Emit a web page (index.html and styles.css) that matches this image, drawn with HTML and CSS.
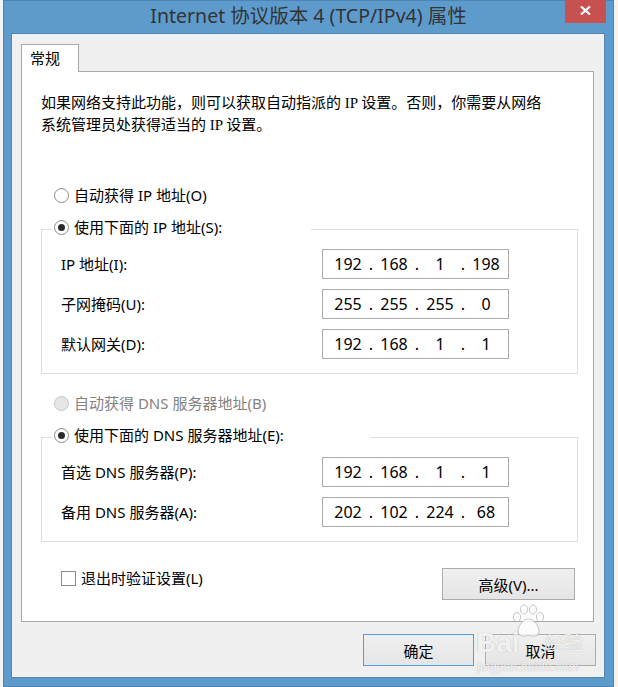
FILE: index.html
```html
<!DOCTYPE html>
<html lang="zh-CN">
<head>
<meta charset="utf-8">
<title>Internet 协议版本 4 (TCP/IPv4) 属性</title>
<link rel="stylesheet" href="styles.css">
</head>
<body>
<div class="window">
  <div class="titlebar">
    <span class="title">Internet 协议版本 4 (TCP/IPv4) 属性</span>
    <button class="close" type="button" aria-label="关闭">
      <svg width="11" height="9" viewBox="0 0 11 9"><path d="M1 0.5 L10 8.5 M10 0.5 L1 8.5" stroke="#fff" stroke-width="2.2" fill="none"/></svg>
    </button>
  </div>
  <div class="client">
    <div class="tab">常规</div>
    <div class="panel">
      <p class="desc">如果网络支持此功能，则可以获取自动指派的 IP 设置。否则，你需要从网络<br>系统管理员处获得适当的 IP 设置。</p>

      <div class="radio-row r-auto-ip"><span class="radio"></span><span>自动获得 IP 地址(O)</span></div>

      <div class="group">
        <div class="group-head head-ip"><div class="radio-row"><span class="radio on"></span><span>使用下面的 IP 地址(S):</span></div></div>
        <div class="fields">
          <span class="lbl">IP 地址(I):</span>
          <div class="ip"><span class="oct">192</span><span class="dot">.</span><span class="oct">168</span><span class="dot">.</span><span class="oct">1</span><span class="dot">.</span><span class="oct">198</span></div>
          <span class="lbl">子网掩码(U):</span>
          <div class="ip"><span class="oct">255</span><span class="dot">.</span><span class="oct">255</span><span class="dot">.</span><span class="oct">255</span><span class="dot">.</span><span class="oct">0</span></div>
          <span class="lbl">默认网关(D):</span>
          <div class="ip"><span class="oct">192</span><span class="dot">.</span><span class="oct">168</span><span class="dot">.</span><span class="oct">1</span><span class="dot">.</span><span class="oct">1</span></div>
        </div>
      </div>

      <div class="radio-row r-auto-dns disabled"><span class="radio"></span><span>自动获得 DNS 服务器地址(B)</span></div>

      <div class="group">
        <div class="group-head head-dns"><div class="radio-row"><span class="radio on"></span><span>使用下面的 DNS 服务器地址(E):</span></div></div>
        <div class="fields">
          <span class="lbl">首选 DNS 服务器(P):</span>
          <div class="ip"><span class="oct">192</span><span class="dot">.</span><span class="oct">168</span><span class="dot">.</span><span class="oct">1</span><span class="dot">.</span><span class="oct">1</span></div>
          <span class="lbl">备用 DNS 服务器(A):</span>
          <div class="ip"><span class="oct">202</span><span class="dot">.</span><span class="oct">102</span><span class="dot">.</span><span class="oct">224</span><span class="dot">.</span><span class="oct">68</span></div>
        </div>
      </div>

      <div class="opts-row">
        <div class="check-row"><span class="check"></span><span>退出时验证设置(L)</span></div>
        <button class="btn btn-adv" type="button">高级(V)...</button>
      </div>
    </div>
    <div class="actions">
      <button class="btn btn-main default" type="button">确定</button>
      <button class="btn btn-main" type="button">取消</button>
    </div>
  </div>
</div>

<div class="watermark" aria-hidden="true">
  <svg class="wm-paw" width="36" height="34" viewBox="0 0 36 34">
    <g fill="rgba(255,255,255,0.8)" stroke="rgba(150,150,150,0.55)" stroke-width="1">
      <ellipse cx="7" cy="13" rx="3.6" ry="4.6"/>
      <ellipse cx="14" cy="5.5" rx="3.6" ry="4.6"/>
      <ellipse cx="23" cy="5.5" rx="3.6" ry="4.6"/>
      <ellipse cx="30" cy="13" rx="3.6" ry="4.6"/>
      <path d="M18.5 15 C12 15 8 23 8 27.5 C8 32.5 13 32.5 18.5 31.5 C24 32.5 29 32.5 29 27.5 C29 23 25 15 18.5 15 Z"/>
    </g>
  </svg>
  <span class="wm-bai">Bai</span>
  <span class="wm-jy">经验</span>
  <span class="wm-url">jingyan.baidu.com</span>
</div>
</body>
</html>
```

FILE: styles.css
```css
* { box-sizing: border-box; }

html, body {
  margin: 0;
  padding: 0;
}

body {
  position: relative;
  width: 618px;
  height: 687px;
  overflow: hidden;
  background: #f3f3f3;
  font-family: "Noto Sans", "Noto Sans CJK SC", sans-serif;
  font-size: 15px;
  color: #000;
}

.window {
  position: relative;
  margin-left: 3px;
  width: 611px;
  height: 687px;
  background: #5e9bcd;
  border: 1px solid #4d84b6;
}

.titlebar {
  position: relative;
  height: 32px;
  padding-bottom: 2px;
  display: flex;
  align-items: center;
  justify-content: center;
}

.title {
  font-size: 19.5px;
  line-height: 24px;
  color: #333;
}

.close {
  position: absolute;
  top: -1px;
  right: 7px;
  width: 41px;
  height: 23px;
  padding: 0 0 2px;
  border: 0;
  background: #c75050;
  display: flex;
  align-items: center;
  justify-content: center;
}

.close svg { display: block; }

.client {
  margin-left: 7px;
  width: 594px;
  height: 645px;
  background: #f0f0f0;
  border: 1px solid #5586b3;
  display: flex;
  flex-direction: column;
}

.tab {
  position: relative;
  z-index: 1;
  margin: 10px 0 0 9px;
  width: 58px;
  height: 28px;
  padding-left: 8px;
  background: #fff;
  border: 1px solid #a8a8a8;
  border-bottom: 0;
  line-height: 26px;
}

.panel {
  margin: -1px 0 0 9px;
  width: 573px;
  height: 551px;
  padding: 0 15px 0 19px;
  background: #fff;
  border: 1px solid #a8a8a8;
}

.desc {
  margin: 20px 0 0;
  font-family: "Liberation Serif", "Noto Sans CJK SC", serif;
  line-height: 22px;
}

.radio-row {
  display: flex;
  align-items: center;
  gap: 5px;
  height: 22px;
  line-height: 22px;
  white-space: nowrap;
}

.radio {
  position: relative;
  flex: none;
  width: 15px;
  height: 15px;
  border-radius: 50%;
  border: 1px solid #8c8c8c;
  background: #fff;
}

.radio.on::after {
  content: "";
  position: absolute;
  left: 3px;
  top: 3px;
  width: 7px;
  height: 7px;
  border-radius: 50%;
  background: #2a2a2a;
}

.r-auto-ip { margin: 48px 0 0 13px; }

.r-auto-dns { margin: 18px 0 0 13px; }

.disabled { color: #838383; }

.disabled .radio {
  border-color: #c8c8c8;
  background: #e6e6e6;
}

.group {
  margin-top: 23px;
  border: 1px solid #dcdcdc;
  padding-bottom: 14px;
}

.group-head {
  margin: -14px 0 0 10px;
  padding-left: 2px;
  background: #fff;
}

.head-ip { width: 259px; }
.head-dns { width: 319px; }

.fields {
  display: grid;
  grid-template-columns: 261px 187px;
  grid-auto-rows: 30px;
  row-gap: 10px;
  align-items: center;
  padding: 11px 0 0 19px;
}

.lbl {
  line-height: 22px;
  white-space: nowrap;
}

.ip {
  display: flex;
  align-items: center;
  width: 187px;
  height: 30px;
  padding-left: 6px;
  border: 1px solid #ababab;
  background: #fff;
  font-size: 16px;
  line-height: 20px;
}

.oct {
  width: 38px;
  text-align: center;
}

.dot {
  width: 8px;
  text-align: center;
}

.opts-row {
  display: flex;
  justify-content: space-between;
  align-items: flex-start;
  margin-top: 25px;
}

.check-row {
  display: flex;
  align-items: center;
  gap: 5px;
  height: 22px;
  margin-left: 20px;
  line-height: 22px;
}

.check {
  width: 15px;
  height: 15px;
  border: 1px solid #8c8c8c;
  background: #fff;
}

.btn {
  padding: 0;
  height: 32px;
  font: inherit;
  color: #000;
  background: linear-gradient(#f0f0f0, #e5e5e5);
  border: 1px solid #acacac;
}

.btn-adv {
  width: 133px;
  margin: 1px 3px 0 0;
}

.actions {
  display: flex;
  justify-content: flex-end;
  gap: 11px;
  margin-top: 12px;
  padding-right: 8px;
}

.btn-main { width: 111px; }

.btn-main.default { border-color: #4a9fe6; }

/* Baidu jingyan watermark overlaid on the screenshot */
.watermark {
  position: absolute;
  left: 474px;
  top: 600px;
  width: 120px;
  height: 80px;
  pointer-events: none;
  color: rgba(255, 255, 255, 0.85);
  text-shadow: 0 0 1px rgba(120, 120, 120, 0.6);
  font-family: "Liberation Sans", "Noto Sans CJK SC", sans-serif;
}

.wm-paw {
  position: absolute;
  left: 36px;
  top: 4px;
}

.wm-bai {
  position: absolute;
  left: 2px;
  top: 27px;
  font-size: 28px;
  font-weight: bold;
  line-height: 32px;
}

.wm-jy {
  position: absolute;
  left: 71px;
  top: 33px;
  font-size: 19px;
  line-height: 22px;
}

.wm-url {
  position: absolute;
  left: 3px;
  top: 60px;
  font-size: 12px;
  line-height: 14px;
  letter-spacing: 0.3px;
}
```
